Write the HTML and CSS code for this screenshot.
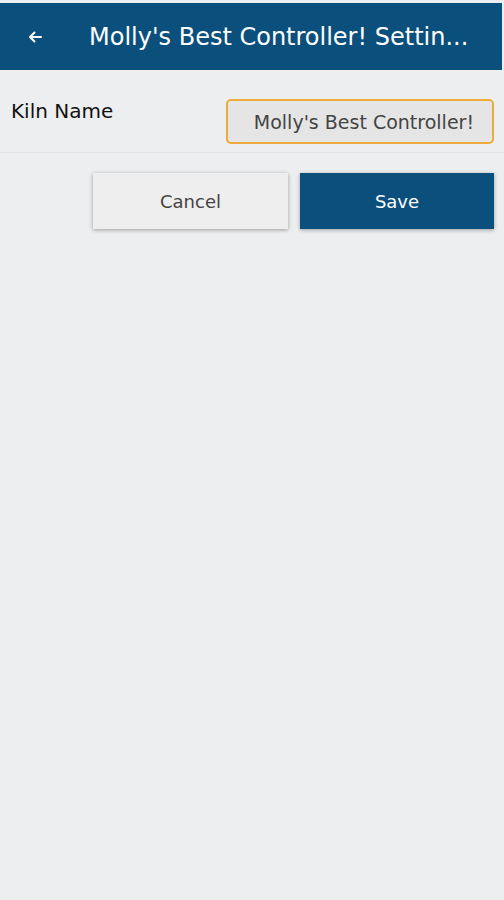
FILE: index.html
```html
<!DOCTYPE html>
<html>
<head>
<meta charset="utf-8">
<link rel="stylesheet" href="styles.css">
</head>
<body>
<div class="app">
  <header class="topbar">
    <span class="back">
      <svg width="14" height="12" viewBox="0 0 14 12"><path d="M13 6H2M6.5 1.5L2 6l4.5 4.5" fill="none" stroke="#fff" stroke-width="2" stroke-linecap="round" stroke-linejoin="round"/></svg>
    </span>
    <h1 class="title">Molly's Best Controller! Settin...</h1>
  </header>
  <div class="row">
    <label class="label">Kiln Name</label>
    <div class="input">Molly's Best Controller!</div>
  </div>
  <div class="actions">
    <button class="btn cancel">Cancel</button>
    <button class="btn save">Save</button>
  </div>
</div>
</body>
</html>
```
FILE: styles.css
```css
html, body {
  margin: 0;
  padding: 0;
  background: #edeef0;
  font-family: "DejaVu Sans", "Open Sans", sans-serif;
}
.app {
  width: 504px;
  height: 900px;
  padding-top: 3px;
  box-sizing: border-box;
}
.topbar {
  height: 67px;
  margin-right: 2px;
  background: #0b4f7c;
  display: flex;
  align-items: center;
}
.back {
  width: 89px;
  padding-left: 28px;
  box-sizing: border-box;
  display: flex;
  align-items: center;
}
.title {
  margin: 0;
  padding-top: 1px;
  color: #fff;
  font-size: 24px;
  font-weight: 400;
  white-space: nowrap;
}
.row {
  height: 82px;
  display: flex;
  justify-content: space-between;
  align-items: flex-start;
  border-bottom: 1px solid #e2e3e5;
  padding: 0 10px 0 11px;
}
.label {
  margin-top: 29px;
  font-size: 20px;
  color: #111;
}
.input {
  margin-top: 29px;
  width: 268px;
  height: 45px;
  box-sizing: border-box;
  border: 2px solid #eeaa3a;
  border-radius: 5px;
  background: #e5e5e5;
  color: #444;
  font-size: 19px;
  display: flex;
  align-items: center;
  justify-content: flex-end;
  padding-right: 18px;
}
.actions {
  display: flex;
  justify-content: flex-end;
  gap: 12px;
  padding: 20px 10px 0 0;
}
.btn {
  width: 195px;
  height: 56px;
  border: none;
  font-family: inherit;
  font-size: 18px;
  box-shadow: 0 1px 4px rgba(0,0,0,0.35);
}
.cancel {
  background: #eeeeee;
  color: #444;
}
.save {
  width: 194px;
  background: #0b4f7c;
  color: #fff;
}
```
